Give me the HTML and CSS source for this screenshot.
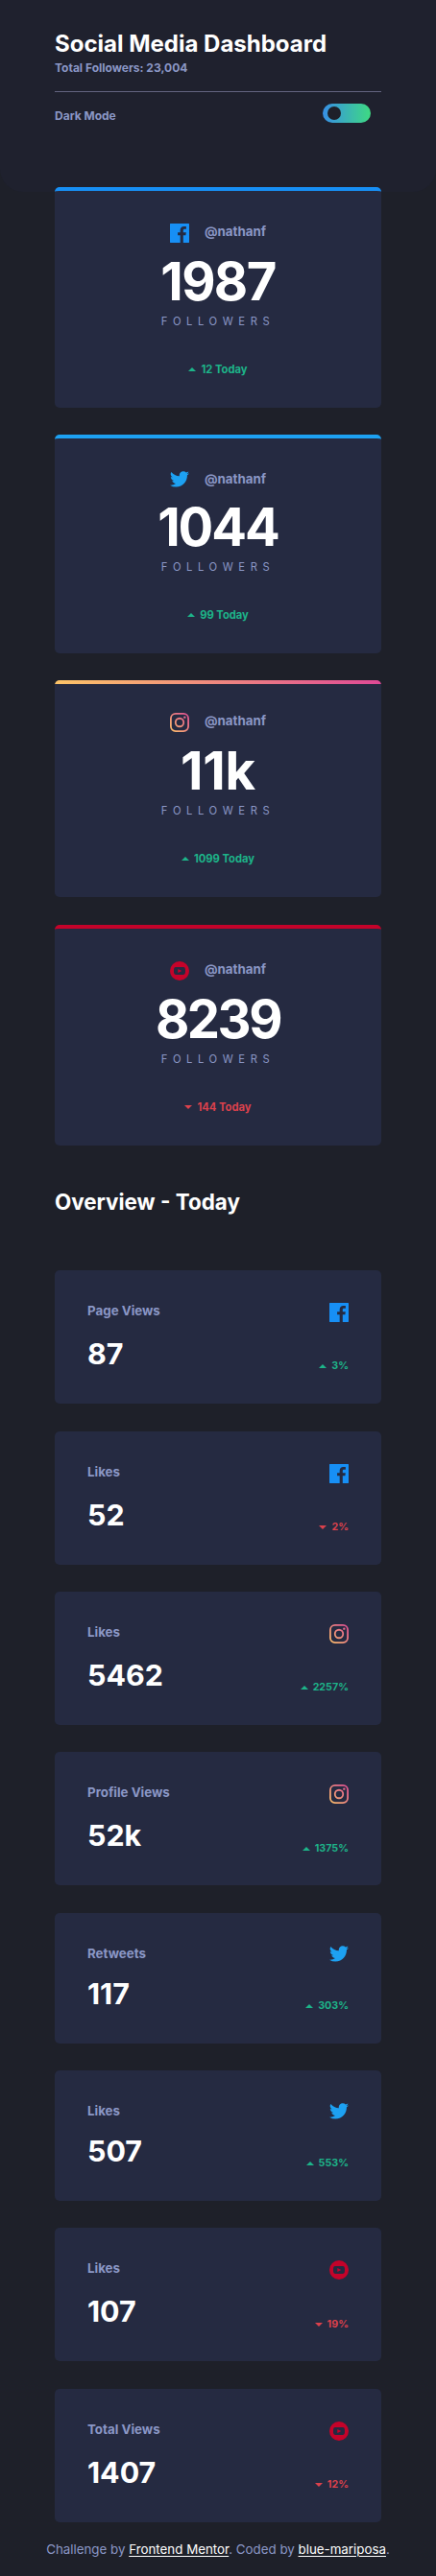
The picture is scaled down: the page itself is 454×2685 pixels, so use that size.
FILE: index.html
```html
<!DOCTYPE html>
<html lang="en">
<head>
<meta charset="utf-8">
<title>Social Media Dashboard</title>
<link rel="stylesheet" href="styles.css">
</head>
<body>
<svg class="sprite" aria-hidden="true">
  <defs>
    <linearGradient id="ig" x1="0" y1="20" x2="20" y2="0" gradientUnits="userSpaceOnUse"><stop offset="0" stop-color="#fdc468"/><stop offset="1" stop-color="#df4996"/></linearGradient>
    <symbol id="facebook" viewBox="0 0 20 20"><path fill="#178ff5" d="M19.5 0H.5C.2 0 0 .2 0 .5v19c0 .3.2.5.5.5h10.184v-7.745H8.076V9.237h2.606V7.01c0-2.583 1.578-3.99 3.883-3.99 1.104 0 2.052.082 2.329.119v2.7h-1.598c-1.254 0-1.496.597-1.496 1.47v1.928h2.989l-.39 3.018h-2.6V20h5.7c.3 0 .5-.2.5-.5V.5c0-.3-.2-.5-.5-.5z"/></symbol>
    <symbol id="twitter" viewBox="0 0 20 17"><path fill="#1da1f2" d="M20 2.172a8.192 8.192 0 01-2.357.646 4.11 4.11 0 001.804-2.27 8.22 8.22 0 01-2.605.996A4.096 4.096 0 0013.847.248c-2.65 0-4.596 2.472-3.998 5.037A11.648 11.648 0 011.392.998a4.109 4.109 0 001.27 5.478 4.086 4.086 0 01-1.858-.513c-.045 1.9 1.318 3.679 3.291 4.075a4.113 4.113 0 01-1.853.07 4.106 4.106 0 003.833 2.849A8.25 8.25 0 010 14.658a11.616 11.616 0 006.29 1.843c7.618 0 11.922-6.434 11.662-12.205A8.354 8.354 0 0020 2.172z"/></symbol>
    <symbol id="instagram" viewBox="0 0 20 20"><rect x=".9" y=".9" width="18.2" height="18.2" rx="5" fill="none" stroke="url(#ig)" stroke-width="1.8"/><circle cx="10" cy="10" r="4.25" fill="none" stroke="url(#ig)" stroke-width="1.8"/><circle cx="15.34" cy="4.66" r="1.2" fill="url(#ig)"/></symbol>
    <symbol id="youtube" viewBox="0 0 20 20"><path fill="#c4032a" fill-rule="evenodd" d="M10 0a10 10 0 100 20 10 10 0 000-20zM6 6.1Q10 5.7 14 6.1Q15.8 6.2 15.9 8Q16.1 10 15.9 12Q15.8 13.8 14 13.9Q10 14.3 6 13.9Q4.200 13.800 4.100 12Q3.900 10 4.100 8Q4.200 6.200 6 6.100zM8.300 8.100v3.800l4-1.900z"/></symbol>
    <symbol id="up" viewBox="0 0 8 4"><path fill="#1db489" d="M0 4l4-4 4 4z"/></symbol>
    <symbol id="down" viewBox="0 0 8 4"><path fill="#dc414c" d="M0 0l4 4 4-4z"/></symbol>
  </defs>
</svg>

<header class="header">
  <h1 class="title">Social Media Dashboard</h1>
  <p class="total">Total Followers: 23,004</p>
  <div class="mode"><span class="mode-label">Dark Mode</span><span class="toggle"><span class="knob"></span></span></div>
</header>

<main class="main">
  <section class="followers">
    <article class="card facebook">
      <div class="account"><svg class="icon"><use href="#facebook"/></svg><span class="handle">@nathanf</span></div>
      <p class="count">1987</p><p class="unit">FOLLOWERS</p>
      <p class="change up"><svg class="arrow"><use href="#up"/></svg>12 Today</p>
    </article>
    <article class="card twitter">
      <div class="account"><svg class="icon bird"><use href="#twitter"/></svg><span class="handle">@nathanf</span></div>
      <p class="count">1044</p><p class="unit">FOLLOWERS</p>
      <p class="change up"><svg class="arrow"><use href="#up"/></svg>99 Today</p>
    </article>
    <article class="card instagram">
      <div class="account"><svg class="icon"><use href="#instagram"/></svg><span class="handle">@nathanf</span></div>
      <p class="count">11k</p><p class="unit">FOLLOWERS</p>
      <p class="change up"><svg class="arrow"><use href="#up"/></svg>1099 Today</p>
    </article>
    <article class="card youtube">
      <div class="account"><svg class="icon"><use href="#youtube"/></svg><span class="handle">@nathanf</span></div>
      <p class="count">8239</p><p class="unit">FOLLOWERS</p>
      <p class="change down"><svg class="arrow"><use href="#down"/></svg>144 Today</p>
    </article>
  </section>

  <h2 class="overview-title">Overview - Today</h2>

  <section class="overview">
    <article class="stat wide">
      <div class="col"><span class="label">Page Views</span><span class="value">87</span></div>
      <div class="col end"><svg class="icon"><use href="#facebook"/></svg><span class="change up"><svg class="arrow"><use href="#up"/></svg>3%</span></div>
    </article>
    <article class="stat">
      <div class="col"><span class="label">Likes</span><span class="value">52</span></div>
      <div class="col end"><svg class="icon"><use href="#facebook"/></svg><span class="change down"><svg class="arrow"><use href="#down"/></svg>2%</span></div>
    </article>
    <article class="stat">
      <div class="col"><span class="label">Likes</span><span class="value">5462</span></div>
      <div class="col end"><svg class="icon"><use href="#instagram"/></svg><span class="change up"><svg class="arrow"><use href="#up"/></svg>2257%</span></div>
    </article>
    <article class="stat wide low">
      <div class="col"><span class="label">Profile Views</span><span class="value">52k</span></div>
      <div class="col end"><svg class="icon"><use href="#instagram"/></svg><span class="change up"><svg class="arrow"><use href="#up"/></svg>1375%</span></div>
    </article>
    <article class="stat short">
      <div class="col"><span class="label">Retweets</span><span class="value">117</span></div>
      <div class="col end"><svg class="icon bird"><use href="#twitter"/></svg><span class="change up"><svg class="arrow"><use href="#up"/></svg>303%</span></div>
    </article>
    <article class="stat short">
      <div class="col"><span class="label">Likes</span><span class="value">507</span></div>
      <div class="col end"><svg class="icon bird"><use href="#twitter"/></svg><span class="change up"><svg class="arrow"><use href="#up"/></svg>553%</span></div>
    </article>
    <article class="stat wide low">
      <div class="col"><span class="label">Likes</span><span class="value">107</span></div>
      <div class="col end"><svg class="icon"><use href="#youtube"/></svg><span class="change down"><svg class="arrow"><use href="#down"/></svg>19%</span></div>
    </article>
    <article class="stat">
      <div class="col"><span class="label">Total Views</span><span class="value">1407</span></div>
      <div class="col end"><svg class="icon"><use href="#youtube"/></svg><span class="change down"><svg class="arrow"><use href="#down"/></svg>12%</span></div>
    </article>
  </section>
</main>
<footer class="footer">Challenge by <a class="link" href="#">Frontend Mentor</a>. Coded by <a class="link" href="#">blue-mariposa</a>.</footer>
</body>
</html>
```
FILE: styles.css
```css
* { box-sizing: border-box; }
body { margin: 0; background: #1e2029; color: #fff; font-family: Inter, sans-serif; }
h1, h2, p { margin: 0; }
.sprite { display: block; width: 0; height: 0; }

.header { height: 200px; padding: 31px 57px 0; background: #1f212e; border-radius: 0 0 24px 24px; }
.title { font-size: 24px; font-weight: 700; line-height: 29px; }
.total { padding-top: 1px; color: #8b97c6; font-size: 12px; font-weight: 700; line-height: 19px; }
.mode { display: flex; justify-content: space-between; margin-top: 15px; padding: 12px 11px 0 0; border-top: 1px solid #63647f; }
.mode-label { padding-top: 3px; color: #8b97c6; font-size: 12px; font-weight: 700; line-height: 19px; }
.toggle { display: flex; width: 50px; height: 20px; padding: 3px 5px; border-radius: 10px; background: linear-gradient(90deg, #378fe6, #3eda82); }
.knob { width: 14px; height: 14px; border-radius: 50%; background: #1e2029; }

.main { width: 340px; margin: -5px auto 0; }
.followers { display: flex; flex-direction: column; gap: 28px; }
.card { padding: 34px 0 32px; border-top: 4px solid; border-radius: 5px; background: #252a41; text-align: center; }
.facebook { border-color: #178ff5; }
.twitter { border-color: #1da1f2; }
.instagram { border-top: 0; background: linear-gradient(90deg, #fdc468, #df4996) top / 100% 4px no-repeat #252a41; }
.youtube { margin-top: 1px; border-color: #c4032a; }
.account { display: flex; justify-content: center; gap: 16px; height: 27px; }
.twitter .account { height: 25px; }
.icon { display: block; flex: none; width: 20px; height: 20px; }
.bird { height: 17px; }
.handle { color: #8b97c6; font-size: 13.333px; font-weight: 700; line-height: 16px; }
.count { margin-bottom: 1px; font-size: 54.4px; font-weight: 700; letter-spacing: -2px; line-height: 66px; }
.facebook .count { letter-spacing: -1.6px; }
.instagram .count { letter-spacing: -0.2px; }
.youtube .count { letter-spacing: -2.5px; }
.unit { color: #8b97c6; font-size: 11.2px; letter-spacing: 0.5em; line-height: 16px; }
.change { display: flex; align-items: center; justify-content: center; gap: 5px; font-size: 11.2px; font-weight: 700; line-height: 16px; }
.card .change { margin-top: 34px; }
.up { color: #1db489; }
.down { color: #dc414c; }
.arrow { display: block; width: 8px; height: 4px; }

.overview-title { margin: 44px 0 57px; font-size: 22.4px; font-weight: 700; line-height: 29px; }
.overview { display: flex; flex-direction: column; gap: 28px; }
.stat { display: flex; justify-content: space-between; height: 139px; padding: 34px; border-radius: 5px; background: #252a41; }
.wide { margin-bottom: 1px; }
.short { height: 136px; }
.col { display: flex; flex-direction: column; justify-content: space-between; }
.end { align-items: flex-end; }
.label { color: #8b97c6; font-size: 13.333px; font-weight: 700; line-height: 16px; }
.value { font-size: 30.4px; font-weight: 700; line-height: 36px; }
.stat .change { font-size: 10.7px; line-height: 11px; }
.low .change { margin-bottom: -1px; }

.footer { padding: 18px 0; color: #8b97c6; font-size: 13.333px; line-height: 20px; text-align: center; }
.link { color: #fff; text-decoration-thickness: 1px; text-underline-offset: 2px; }
```
